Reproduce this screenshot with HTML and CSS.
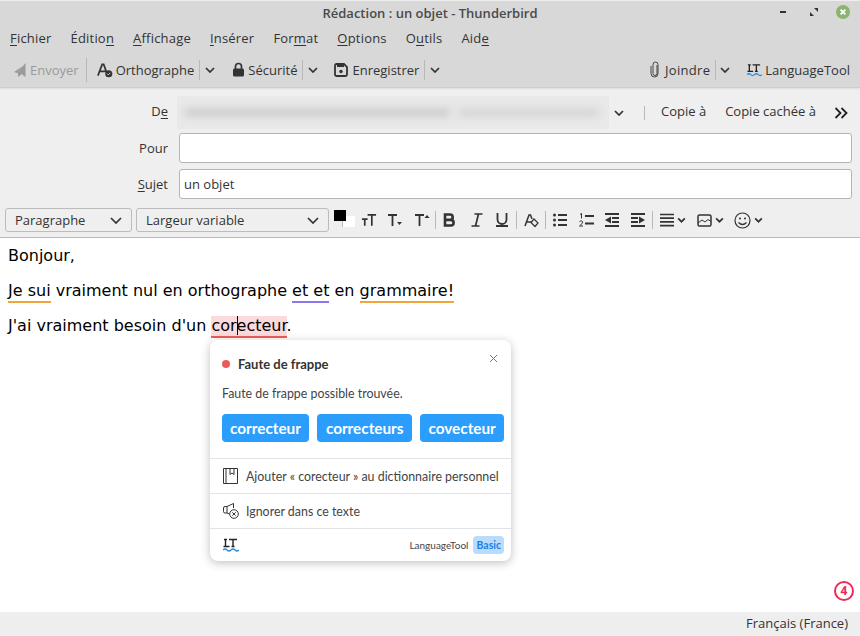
FILE: index.html
```html
<!DOCTYPE html>
<html lang="fr">
<head>
  <meta charset="UTF-8">
  <title>Rédaction : un objet - Thunderbird</title>
  <link rel="stylesheet" href="styles.css">
</head>
<body>
  <!-- Title bar -->
  <header class="titlebar">
    <span class="title">Rédaction : un objet - Thunderbird</span>
    <div class="win-btns">
      <span class="win-min"></span>
      <svg class="win-max" width="8" height="8" viewBox="0 0 8 8"><path d="M4 0h4v4zM4 8H0V4z" fill="#333"/></svg>
      <svg class="win-close" width="14" height="14" viewBox="0 0 14 14"><circle cx="7" cy="7" r="7" fill="#8bb56e"/><path d="M4.600 4.600l4.800 4.800M9.400 4.600l-4.800 4.800" stroke="#fff" stroke-width="1.800"/></svg>
    </div>
  </header>

  <!-- Menu -->
  <nav class="menubar">
    <span><u>F</u>ichier</span>
    <span>Éditio<u>n</u></span>
    <span><u>A</u>ffichage</span>
    <span><u>I</u>nsérer</span>
    <span>For<u>m</u>at</span>
    <span><u>O</u>ptions</span>
    <span>O<u>u</u>tils</span>
    <span>Aid<u>e</u></span>
  </nav>

  <!-- Main toolbar -->
  <div class="toolbar">
    <div class="tb-btn disabled">
      <svg width="13" height="14" viewBox="0 0 13 14"><path d="M12.500 0v14l-4-3-3 3-1-5zM10.500 2.500L1 9l3 1z" fill="#9a9a9a"/></svg>
      Envoyer
    </div>
    <i class="sep tall"></i>
    <div class="tb-btn spell">
      <svg width="16" height="16" viewBox="0 0 17 16"><path d="M1 14L5.500 2h1.600L10 10M3 9.500h6" fill="none" stroke="#333" stroke-width="1.800"/><circle cx="12.500" cy="12" r="3.800" fill="#333"/><path d="M10.800 12l1.200 1.200 2.200-2.200" stroke="#ddd" fill="none"/></svg>
      Orthographe
    </div>
    <i class="sep"></i>
    <svg class="chev" width="10" height="6" viewBox="0 0 10 6"><path d="M1 1l4 4 4-4" fill="none" stroke="#333" stroke-width="1.700"/></svg>
    <div class="tb-btn sec">
      <svg width="13" height="15" viewBox="0 0 13 15"><path d="M3.500 7V4.500a3 3 0 0 1 6 0V7" fill="none" stroke="#333" stroke-width="1.700"/><rect x="1" y="6.500" width="11" height="8" rx="1.500" fill="#333"/></svg>
      Sécurité
    </div>
    <i class="sep"></i>
    <svg class="chev" width="10" height="6" viewBox="0 0 10 6"><path d="M1 1l4 4 4-4" fill="none" stroke="#333" stroke-width="1.700"/></svg>
    <div class="tb-btn sec2">
      <svg width="14" height="14" viewBox="0 0 14 14"><path d="M1 2.500A1.500 1.500 0 0 1 2.500 1H10l3 3v7.500a1.500 1.500 0 0 1-1.500 1.500h-9A1.500 1.500 0 0 1 1 11.500z" fill="none" stroke="#333" stroke-width="1.800"/><path d="M3 1h7v3H3z" fill="#333"/><circle cx="7" cy="8.500" r="1.700" fill="#333"/></svg>
      Enregistrer
    </div>
    <i class="sep"></i>
    <svg class="chev" width="10" height="6" viewBox="0 0 10 6"><path d="M1 1l4 4 4-4" fill="none" stroke="#333" stroke-width="1.700"/></svg>
    <div class="tb-right">
      <div class="tb-btn join">
        <svg width="10" height="17" viewBox="0 0 10 17"><path d="M7 4v8.500a2 2 0 0 1-4 0V3.500a2.500 2.500 0 0 1 5 0v9a3.500 3.500 0 0 1-7 0V5" fill="none" stroke="#444" stroke-width="1"/></svg>
        Joindre
      </div>
      <i class="sep"></i>
      <svg class="chev" width="10" height="6" viewBox="0 0 10 6"><path d="M1 1l4 4 4-4" fill="none" stroke="#333" stroke-width="1.700"/></svg>
      <div class="tb-btn lt-btn">
        <svg width="15" height="14" viewBox="0 0 16 14"><path d="M1 1.500h3M2.500 1.500v7M.5 8.500h6M6 1.500h8M10 1.500v7M8.500 8.500h3" fill="none" stroke="#222" stroke-width="1.400"/><path d="M0 12q2-2 4 0t4 0 4 0 4 0" fill="none" stroke="#2a8ddc" stroke-width="1.300"/></svg>
        LanguageTool
      </div>
    </div>
  </div>

  <!-- Compose headers -->
  <section class="compose">
    <div class="row from-row">
      <label>D<u>e</u></label>
      <div class="from">
        <span class="blur b1"></span>
        <span class="blur b2"></span>
      </div>
      <svg class="chev from-chev" width="10" height="6" viewBox="0 0 10 6"><path d="M1 1l4 4 4-4" fill="none" stroke="#333" stroke-width="1.700"/></svg>
      <i class="sep"></i>
      <span class="cc">Copie à</span>
      <span class="cc">Copie cachée à</span>
      <svg class="more" width="14" height="12" viewBox="0 0 14 12"><path d="M1.500 1l5 5-5 5M7.500 1l5 5-5 5" fill="none" stroke="#222" stroke-width="1.800"/></svg>
    </div>
    <div class="row">
      <label>Pour</label>
      <div class="field"></div>
    </div>
    <div class="row">
      <label><u>S</u>ujet</label>
      <div class="field">un objet</div>
    </div>

    <!-- Format toolbar -->
    <div class="fmt">
      <div class="select para">Paragraphe<svg width="12" height="7" viewBox="0 0 12 7"><path d="M1 1l5 5 5-5" fill="none" stroke="#333" stroke-width="1.700"/></svg></div>
      <div class="select font">Largeur variable<svg width="12" height="7" viewBox="0 0 12 7"><path d="M1 1l5 5 5-5" fill="none" stroke="#333" stroke-width="1.700"/></svg></div>
      <div class="colors"><span class="line"></span><span class="bg"></span><span class="fg"></span></div>
      <svg class="ic mr10" width="16" height="14" viewBox="0 0 17 14"><path d="M1 6h6M4 6v7M7 1.500h9M11.500 1.500V13" fill="none" stroke="#333" stroke-width="1.800"/></svg>
      <svg class="ic mr12" width="15" height="14" viewBox="0 0 15 14"><path d="M1 2h9M5.500 2v11" fill="none" stroke="#333" stroke-width="1.800"/><path d="M10 9h5l-2.500 3z" fill="#333"/></svg>
      <svg class="ic mr5" width="16" height="14" viewBox="0 0 16 14"><path d="M1 2h9M5.500 2v11" fill="none" stroke="#333" stroke-width="1.800"/><path d="M10.500 5h5L13 2z" fill="#333"/></svg>
      <i class="sep"></i>
      <svg class="ic mr15" width="13" height="14" viewBox="0 0 13 14"><path d="M2 1.500h5a2.700 2.700 0 0 1 0 5.400H2zM2 6.900h5.800a2.800 2.800 0 0 1 0 5.600H2z" fill="none" stroke="#333" stroke-width="2.600"/></svg>
      <svg class="ic mr13" width="12" height="14" viewBox="0 0 12 14"><path d="M3.500 1h8M.5 13h8M7.500 1l-3 12" fill="none" stroke="#333" stroke-width="1.700"/></svg>
      <svg class="ic mr8" width="12" height="14" viewBox="0 0 12 14"><path d="M1.500 0v6.500a4.500 4.500 0 0 0 9 0V0M0 13h12" fill="none" stroke="#333" stroke-width="1.800"/></svg>
      <i class="sep"></i>
      <svg class="ic mr6" width="15" height="15" viewBox="0 0 15 15"><path d="M1 13L5 2h1.500L8 6M2.500 9H7" fill="none" stroke="#333" stroke-width="1.500"/><path d="M10 6l4 4-3 3.500-4-4z" fill="none" stroke="#333" stroke-width="1.200"/></svg>
      <i class="sep"></i>
      <svg class="ic mr12" width="14" height="14" viewBox="0 0 14 14"><path d="M5 2h9M5 7h9M5 12h9" stroke="#333" stroke-width="1.800"/><circle cx="1.500" cy="2" r="1.500" fill="#333"/><circle cx="1.500" cy="7" r="1.500" fill="#333"/><circle cx="1.500" cy="12" r="1.500" fill="#333"/></svg>
      <svg class="ic mr11" width="15" height="14" viewBox="0 0 15 14"><path d="M6 3h9M6 10.500h9" stroke="#333" stroke-width="1.800"/><path d="M1 1.500l1.500-1v5M.5 8.500q2-1.500 3 0t-3 4.500h3.500" fill="none" stroke="#333"/></svg>
      <svg class="ic mr12" width="14" height="14" viewBox="0 0 14 14"><path d="M0 1h14M0 13h14M7 5h7M7 9h7" stroke="#333" stroke-width="1.800"/><path d="M6 3.500v7L0 7z" fill="#333"/></svg>
      <svg class="ic mr7" width="14" height="14" viewBox="0 0 14 14"><path d="M0 1h14M0 13h14M0 5h7M0 9h7" stroke="#333" stroke-width="1.800"/><path d="M8 3.500v7L14 7z" fill="#333"/></svg>
      <i class="sep"></i>
      <svg class="ic mr3" width="14" height="14" viewBox="0 0 14 14"><path d="M0 1.500h14M0 5.200h14M0 8.900h14M0 12.600h14" stroke="#333" stroke-width="1.700"/></svg>
      <svg class="ic mr11" width="9" height="6" viewBox="0 0 8 5"><path d="M1 1l3 3 3-3" fill="none" stroke="#333" stroke-width="1.500"/></svg>
      <svg class="ic mr3" width="15" height="13" viewBox="0 0 15 13"><rect x="1" y="1" width="13" height="11" rx="1.500" fill="none" stroke="#333" stroke-width="1.500"/><path d="M1 9l4-3 3 2 3-2.500 3 2" fill="none" stroke="#333"/></svg>
      <svg class="ic mr10" width="9" height="6" viewBox="0 0 8 5"><path d="M1 1l3 3 3-3" fill="none" stroke="#333" stroke-width="1.500"/></svg>
      <svg class="ic mr3" width="17" height="17" viewBox="0 0 17 17"><circle cx="8.500" cy="8.500" r="7.500" fill="none" stroke="#333" stroke-width="1.200"/><circle cx="6" cy="6.500" r="1" fill="#333"/><circle cx="11" cy="6.500" r="1" fill="#333"/><path d="M4.500 10.500q4 4 8 0" fill="none" stroke="#333" stroke-width="1.200"/></svg>
      <svg class="ic" width="9" height="6" viewBox="0 0 8 5"><path d="M1 1l3 3 3-3" fill="none" stroke="#333" stroke-width="1.500"/></svg>
    </div>
  </section>

  <!-- Message body -->
  <main class="body">
    <p>Bonjour,</p>
    <p><span class="mark orange">Je sui</span> vraiment nul en orthographe <span class="mark purple">et et</span> en <span class="mark orange">grammaire!</span></p>
    <p>J'ai vraiment besoin d'un <span class="mark red">cor<i class="caret"></i>ecteur</span>.</p>

    <!-- LanguageTool popup -->
    <div class="popup">
      <div class="pop-top">
        <div class="pop-head"><span class="dot"></span><b>Faute de frappe</b>
          <svg class="pop-close" width="9" height="9" viewBox="0 0 9 9"><path d="M1 1l7 7M8 1L1 8" stroke="#777" stroke-width="1"/></svg>
        </div>
        <p class="pop-msg">Faute de frappe possible trouvée.</p>
        <div class="suggestions">
          <span>correcteur</span><span class="wide">correcteurs</span><span>covecteur</span>
        </div>
      </div>
      <div class="pop-row">
        <svg width="16" height="16" viewBox="0 0 16 16"><path d="M.5.500h14v15H.5zM3 .500v15M7 .500v6l2-1.500 2 1.500v-6" fill="none" stroke="#333"/></svg>
        Ajouter « corecteur » au dictionnaire personnel
      </div>
      <div class="pop-row">
        <svg width="16" height="16" viewBox="0 0 16 16"><path d="M4 3.500v6.500H2A1.500 1.500 0 0 1 .5 8.500V5A1.500 1.500 0 0 1 2 3.500zM4 3.500L10.500.5v4.500M4 10l2.500 1" fill="none" stroke="#333"/><circle cx="11" cy="11" r="4.300" fill="#fff" stroke="#333"/><path d="M9.300 9.300l3.400 3.400M12.700 9.300l-3.400 3.400" stroke="#333"/></svg>
        Ignorer dans ce texte
      </div>
      <div class="pop-foot">
        <svg width="16" height="14" viewBox="0 0 16 14"><path d="M1 1.500h3M2.500 1.500v7M.5 8.500h6M6 1.500h8M10 1.500v7M8.500 8.500h3" fill="none" stroke="#222" stroke-width="1.400"/><path d="M0 12q2-2 4 0t4 0 4 0 4 0" fill="none" stroke="#2a8ddc" stroke-width="1.300"/></svg>
        <span class="brand">LanguageTool</span><span class="basic">Basic</span>
      </div>
    </div>

    <span class="count">4</span>
  </main>

  <footer class="status">Français (France)</footer>
</body>
</html>
```

FILE: styles.css
```css
/* General */
html, body {
  margin: 0;
  height: 636px;
  overflow: hidden;
}

body {
  display: flex;
  flex-direction: column;
  background: #fff;
  font-family: "Open Sans", "Noto Sans", sans-serif;
  font-size: 13px;
  color: #333;
}

u {
  text-underline-offset: 2px;
  text-decoration-thickness: 1px;
}

.sep {
  display: block;
  flex: none;
  width: 1px;
  height: 20px;
  background: #b8b8b8;
}

/* Title bar */
.titlebar {
  height: 26px;
  flex: none;
  display: flex;
  justify-content: center;
  align-items: center;
  position: relative;
  padding-bottom: 2px;
  background: #d8d8d8;
  border-top: 1px solid #eee;
  box-sizing: border-box;
}

.title {
  font-weight: 600;
  font-size: 13px;
  color: #4a4a4a;
}

.win-btns {
  position: absolute;
  right: 10px;
  top: 4px;
  display: flex;
  align-items: center;
}

.win-min {
  width: 6px;
  height: 2px;
  margin-right: 24px;
  background: #333;
}

.win-max {
  margin-right: 18px;
}

/* Menu */
.menubar {
  height: 26px;
  flex: none;
  box-sizing: border-box;
  display: flex;
  align-items: center;
  gap: 19px;
  padding: 0 10px 2px;
  letter-spacing: 0.2px;
  background: #d8d8d8;
}

/* Main toolbar */
.toolbar {
  height: 36px;
  flex: none;
  box-sizing: border-box;
  display: flex;
  align-items: center;
  padding: 0 10px 0 13px;
  background: #d8d8d8;
  border-bottom: 1px solid #cfcfcf;
  box-shadow: 0 1px 2px rgba(0, 0, 0, 0.08);
  z-index: 1;
}

.tb-btn {
  display: flex;
  align-items: center;
  gap: 4px;
  margin-right: 5px;
}

.tb-btn.disabled {
  color: #9a9a9a;
}

.sep.tall {
  height: 24px;
  margin: 0 10px 0 2px;
}

.spell {
  gap: 3px;
}

.chev {
  margin: 0 5px;
  flex: none;
}

.sec {
  margin-left: 12px;
  gap: 3px;
}

.sec2 {
  margin-left: 11px;
}

.tb-right {
  margin-left: auto;
  display: flex;
  align-items: center;
}

.join {
  letter-spacing: 0.3px;
  gap: 5px;
}

.tb-right .chev {
  margin-left: 4px;
}

.lt-btn {
  margin: 0 0 0 12px;
  gap: 3px;
}

/* Compose headers */
.compose {
  height: 150px;
  flex: none;
  box-sizing: border-box;
  padding-top: 8px;
  background: #efefef;
  border-bottom: 1px solid #b9b9b9;
}

.row {
  height: 36px;
  display: flex;
  align-items: center;
  padding-right: 8px;
}

.from-row {
  height: 33px;
  margin-bottom: 1px;
}

.from-row label,
.from-row .cc {
  padding-bottom: 3px;
}

.row label {
  width: 168px;
  flex: none;
  text-align: right;
  margin-right: 9px;
}

.from {
  width: 432px;
  height: 33px;
  flex: none;
  display: flex;
  align-items: center;
  gap: 9px;
  background: #e9e9e9;
  overflow: hidden;
}

.blur {
  height: 7px;
  background: #c6c6c6;
  filter: blur(4px);
}

.b1 {
  width: 265px;
  margin-left: 8px;
}

.b2 {
  width: 140px;
  background: #d0d0d0;
}

.from-chev {
  margin: 0 6px 0 5px;
}

.from-row .sep {
  height: 14px;
  margin: 0 16px 0 14px;
}

.cc {
  margin-right: 19px;
}

.more {
  margin-left: -1px;
}

.field {
  flex: 1;
  height: 30px;
  box-sizing: border-box;
  margin-left: 2px;
  line-height: 28px;
  padding-left: 4px;
  background: #fff;
  border: 1px solid #b5b5b5;
  border-radius: 3px;
}

/* Format toolbar */
.fmt {
  display: flex;
  align-items: center;
  height: 28px;
  margin-top: 4px;
  padding-left: 5px;
}

.select {
  height: 24px;
  box-sizing: border-box;
  display: flex;
  align-items: center;
  justify-content: space-between;
  padding: 0 9px 0 9px;
  margin-right: 4px;
  border: 1px solid #bcbcbc;
  border-radius: 3px;
}

.para {
  width: 127px;
}

.font {
  width: 193px;
}

.colors {
  position: relative;
  flex: none;
  width: 21px;
  height: 18px;
  margin: -2px 6px 0 1px;
}

.colors .line {
  position: absolute;
  left: 0;
  top: 6px;
  width: 20px;
  height: 1px;
  background: #bbb;
}

.colors .bg {
  position: absolute;
  left: 8px;
  top: 6px;
  width: 12px;
  height: 11px;
  background: #fff;
  border-left: 1px solid #bbb;
}

.colors .fg {
  position: absolute;
  left: 0;
  top: 0;
  width: 12px;
  height: 11px;
  background: #000;
}

.ic {
  flex: none;
}

.mr3 { margin-right: 3px; }
.mr5 { margin-right: 5px; }
.mr6 { margin-right: 6px; }
.mr7 { margin-right: 7px; }
.mr8 { margin-right: 8px; }
.mr10 { margin-right: 10px; }
.mr11 { margin-right: 11px; }
.mr12 { margin-right: 12px; }
.mr13 { margin-right: 13px; }
.mr15 { margin-right: 15px; }

.fmt .sep {
  height: 18px;
  margin-right: 7px;
}

/* Message body */
.body {
  flex: 1;
  position: relative;
  padding: 8px;
  font-family: "DejaVu Sans", sans-serif;
  font-size: 16px;
  color: #000;
}

.body > p {
  margin: 0 0 16px;
  line-height: 19px;
}

.mark {
  padding-bottom: 1px;
  border-bottom: 2px solid;
}

.orange {
  border-color: #f0a63c;
}

.purple {
  border-color: #8a78ef;
}

.red {
  background: #fadada;
  border-color: #ec5b5b;
}

.caret {
  display: inline-block;
  width: 1px;
  height: 19px;
  margin-right: -1px;
  vertical-align: -4px;
  background: #000;
}

/* LanguageTool popup */
.popup {
  position: absolute;
  left: 210px;
  top: 102px;
  width: 301px;
  height: 221px;
  display: flex;
  flex-direction: column;
  background: #fff;
  border-radius: 8px;
  box-shadow: 0 2px 10px rgba(0, 0, 0, 0.25);
  font-family: "Lato", "Noto Sans", sans-serif;
  font-size: 12.400px;
  color: #444;
}

.pop-top {
  height: 119px;
  flex: none;
  box-sizing: border-box;
  padding: 16px 8px 0 12px;
  border-bottom: 1px solid #e0e4e8;
}

.pop-head {
  display: flex;
  align-items: center;
  height: 16px;
  font-size: 13px;
  color: #333;
}

.pop-head b {
  font-weight: 700;
}

.dot {
  width: 8px;
  height: 8px;
  margin-right: 8px;
  border-radius: 50%;
  background: #ec5b5b;
}

.pop-close {
  position: absolute;
  right: 13px;
  top: 14px;
}

.pop-msg {
  margin: 14px 0 12px;
  line-height: 16px;
}

.suggestions {
  display: flex;
  gap: 8px;
}

.suggestions span {
  flex: none;
  height: 28px;
  line-height: 28px;
  padding: 0 8px;
  border-radius: 4px;
  background: #2a9dfd;
  color: #fff;
  font-size: 15.300px;
  font-weight: 700;
}

.suggestions .wide {
  padding: 0 9px;
}

.pop-row {
  height: 35px;
  flex: none;
  box-sizing: border-box;
  display: flex;
  align-items: center;
  gap: 7px;
  padding-left: 13px;
  border-bottom: 1px solid #e0e4e8;
}

.pop-foot {
  flex: 1;
  display: flex;
  align-items: center;
  padding: 0 7px 0 13px;
}

.brand {
  margin-left: auto;
  margin-right: 5px;
  font-size: 10px;
}

.basic {
  padding: 3px;
  border-radius: 4px;
  background: #b9dcfd;
  color: #1d7fe6;
  font-size: 10.500px;
  font-weight: 700;
}

.count {
  position: absolute;
  right: 6px;
  bottom: 11px;
  width: 16px;
  height: 16px;
  line-height: 16px;
  border: 2px solid #f0295a;
  border-radius: 50%;
  text-align: center;
  color: #f0295a;
  font-family: "Open Sans", sans-serif;
  font-size: 12px;
  font-weight: 700;
}

/* Status bar */
.status {
  height: 24px;
  flex: none;
  padding-right: 12px;
  line-height: 23px;
  text-align: right;
  background: #eeeeee;
}
```
